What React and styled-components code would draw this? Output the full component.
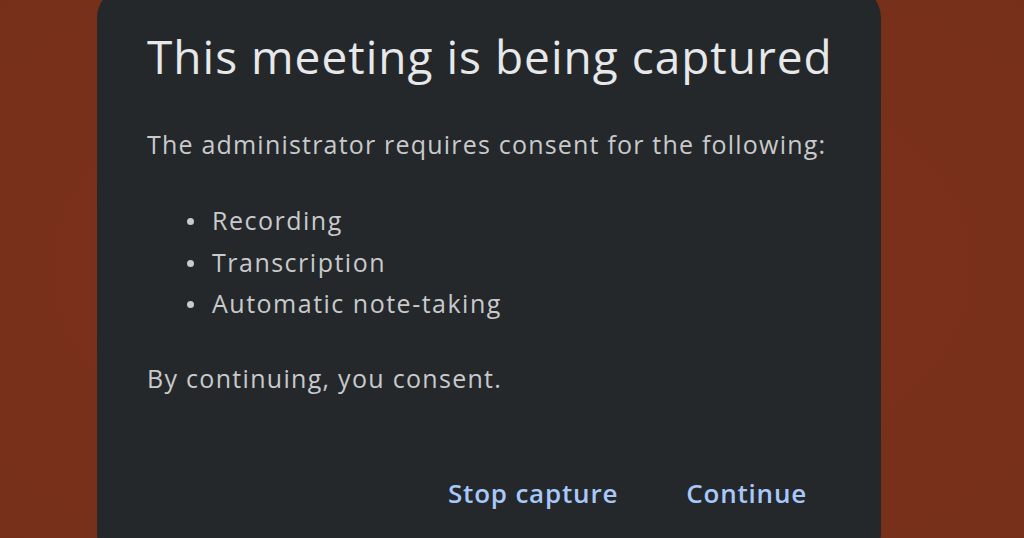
import React from "react";
import styled, { createGlobalStyle } from "styled-components";

const Global = createGlobalStyle`
  html, body {
    margin: 0;
    padding: 0;
    background: #7a311b;
    overflow: hidden;
  }
  body {
    font-family: "Open Sans", "Noto Sans", sans-serif;
  }
`;

const Page = styled.div`
  width: 1024px;
  height: 538px;
  overflow: hidden;
  background: radial-gradient(ellipse at 50% 50%, #7c321c 0%, #7a301a 60%, #76301a 100%);
  display: flex;
  align-items: flex-start;
`;

const Dialog = styled.div`
  box-sizing: border-box;
  margin: -14px 0 0 97px;
  width: 784px;
  height: 580px;
  flex: none;
  background: #25282b;
  border-radius: 32px;
  padding: 42px 50px 0 50px;
  display: flex;
  flex-direction: column;
`;

const Title = styled.h1`
  margin: 0;
  font-size: 46px;
  letter-spacing: 1px;
  line-height: 56px;
  font-weight: 400;
  color: #e6e8ea;
  white-space: nowrap;
`;

const Text = styled.p`
  margin: ${(p) => p.$top}px 0 0 0;
  font-size: 25px;
  letter-spacing: ${(p) => p.$ls}px;
  line-height: 32px;
  color: #c8cacc;
  white-space: nowrap;
`;

const List = styled.ul`
  margin: 40px 0 0 0;
  padding: 0 0 0 65px;
  list-style: none;
`;

const Item = styled.li`
  position: relative;
  font-size: 25px;
  letter-spacing: 1.5px;
  line-height: 41.5px;
  color: #c8cacc;
  white-space: nowrap;
  &::before {
    content: "";
    position: absolute;
    left: -25px;
    top: 18px;
    width: 7px;
    height: 7px;
    border-radius: 50%;
    background: #c8cacc;
  }
`;

const Actions = styled.div`
  margin-top: 83px;
  display: flex;
  justify-content: flex-end;
  gap: 20px;
`;

const Button = styled.button`
  background: none;
  border: none;
  padding: 0 24px;
  font-family: "Open Sans", "Noto Sans", sans-serif;
  font-size: 26px;
  letter-spacing: 0.8px;
  line-height: 32px;
  font-weight: 600;
  color: #a8c7fa;
  cursor: pointer;
`;

export default function App() {
  return (
    <>
      <Global />
      <Page>
        <Dialog>
          <Title>This meeting is being captured</Title>
          <Text $top={44} $ls={1.2}>The administrator requires consent for the following:</Text>
          <List>
            <Item>Recording</Item>
            <Item>Transcription</Item>
            <Item>Automatic note-taking</Item>
          </List>
          <Text $top={37} $ls={1.3}>By continuing, you consent.</Text>
          <Actions>
            <Button>Stop capture</Button>
            <Button>Continue</Button>
          </Actions>
        </Dialog>
      </Page>
    </>
  );
}
